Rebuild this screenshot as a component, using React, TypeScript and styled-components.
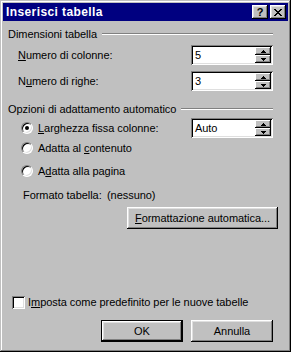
import React from "react";
import styled, { createGlobalStyle } from "styled-components";

const Global = createGlobalStyle`
  html, body { margin: 0; padding: 0; background: #c0c0c0; }
  body {
    font-family: "Liberation Sans", Arial, sans-serif;
    font-size: 11px;
    color: #000;
  }
`;

const Window = styled.div`
  width: 291px;
  height: 352px;
  box-sizing: border-box;
  background: #c0c0c0;
  padding: 3px;
  box-shadow: inset -1px -1px #000, inset 1px 1px #c0c0c0,
    inset -2px -2px #808080, inset 2px 2px #fff;
  display: flex;
  flex-direction: column;
`;

const TitleBar = styled.div`
  height: 18px;
  background: #000080;
  display: flex;
  align-items: center;
  padding: 0 2px 0 3px;
  color: #fff;
  font-weight: bold;
  font-size: 12px;
  letter-spacing: 0.4px;
`;

const TitleText = styled.span`
  flex: 1;
`;

const TitleButtons = styled.div`
  display: flex;
  gap: 2px;
`;

const TitleButton = styled.div`
  width: 16px;
  height: 14px;
  box-sizing: border-box;
  background: #c0c0c0;
  color: #000;
  box-shadow: inset -1px -1px #000, inset 1px 1px #fff,
    inset -2px -2px #808080, inset 2px 2px #dfdfdf;
  display: flex;
  align-items: center;
  justify-content: center;
  font-size: 11px;
  font-weight: bold;
  letter-spacing: 0;
  line-height: 1;
`;

const Body = styled.div`
  flex: 1;
  display: flex;
  flex-direction: column;
  padding: 6px 15px 0 5px;
  letter-spacing: -0.05px;
`;

const SectionHeader = styled.div<{ $top: number }>`
  display: flex;
  align-items: center;
  gap: 5px;
  height: 14px;
  margin-top: ${(p) => p.$top}px;
  white-space: nowrap;
`;

const Rule = styled.div`
  flex: 1;
  height: 0;
  border-top: 1px solid #808080;
  border-bottom: 1px solid #fff;
`;

const FieldRow = styled.div<{ $top: number; $indent: number }>`
  display: flex;
  align-items: center;
  justify-content: space-between;
  height: 20px;
  margin-top: ${(p) => p.$top}px;
  padding-left: ${(p) => p.$indent}px;
`;

const Mn = styled.span`
  text-decoration: underline;
`;

const SpinBox = styled.div`
  width: 82px;
  height: 20px;
  box-sizing: border-box;
  background: #fff;
  padding: 2px;
  box-shadow: inset 1px 1px #808080, inset -1px -1px #fff,
    inset 2px 2px #000, inset -2px -2px #dfdfdf;
  display: flex;
  align-items: stretch;
`;

const SpinValue = styled.div`
  flex: 1;
  display: flex;
  align-items: center;
  padding-left: 2px;
`;

const SpinButtons = styled.div`
  width: 16px;
  display: flex;
  flex-direction: column;
`;

const SpinButton = styled.div`
  flex: 1;
  background: #c0c0c0;
  box-shadow: inset -1px -1px #000, inset 1px 1px #fff,
    inset -2px -2px #808080;
  display: flex;
  align-items: center;
  justify-content: center;
`;

const RadioLabel = styled.div`
  display: flex;
  align-items: center;
  gap: 5px;
`;

const RadioCircle = styled.div<{ $checked?: boolean }>`
  width: 12px;
  height: 12px;
  box-sizing: border-box;
  border-radius: 50%;
  background: #fff;
  border: 1px solid;
  border-color: #808080 #fff #fff #808080;
  box-shadow: inset 1px 1px #000, inset -1px -1px #dfdfdf;
  display: flex;
  align-items: center;
  justify-content: center;
  &::after {
    content: "";
    display: ${(p) => (p.$checked ? "block" : "none")};
    width: 4px;
    height: 4px;
    border-radius: 50%;
    background: #000;
  }
`;

const InfoRow = styled.div`
  display: flex;
  align-items: center;
  height: 14px;
  margin-top: 7px;
  padding-left: 15px;
`;

const InfoLabel = styled.span`
  width: 84px;
`;

const ActionRow = styled.div<{ $top: number }>`
  display: flex;
  justify-content: flex-end;
  gap: 8px;
  margin-top: ${(p) => p.$top}px;
`;

const PushButton = styled.button<{ $w: number; $default?: boolean; $outdent?: number }>`
  width: ${(p) => p.$w}px;
  height: 22px;
  box-sizing: border-box;
  background: #c0c0c0;
  border: ${(p) => (p.$default ? "1px solid #000" : "none")};
  margin: 0 ${(p) => -(p.$outdent || 0)}px 0 0;
  padding: 0;
  font-family: inherit;
  font-size: 11px;
  letter-spacing: inherit;
  color: #000;
  box-shadow: inset -1px -1px #000, inset 1px 1px #fff,
    inset -2px -2px #808080, inset 2px 2px #dfdfdf;
`;

const CheckRow = styled.div`
  display: flex;
  align-items: center;
  gap: 3px;
  margin-top: auto;
  padding-left: 4px;
  height: 14px;
`;

const CheckBox = styled.div`
  width: 13px;
  height: 13px;
  box-sizing: border-box;
  background: #fff;
  box-shadow: inset 1px 1px #808080, inset -1px -1px #fff,
    inset 2px 2px #000, inset -2px -2px #dfdfdf;
`;

const Footer = styled.div`
  display: flex;
  justify-content: flex-end;
  gap: 8px;
  margin-top: 11px;
  margin-bottom: 7px;
`;

const Arrow = ({ up }: { up?: boolean }) => (
  <svg width="5" height="3" viewBox="0 0 5 3" shapeRendering="crispEdges">
    {up ? (
      <path d="M2 0h1v1h1v1h1v1H0V2h1V1h1z" fill="#000" />
    ) : (
      <path d="M0 0h5v1H4v1H3v1H2V2H1V1H0z" fill="#000" />
    )}
  </svg>
);

const Spinner = ({ value }: { value: string }) => (
  <SpinBox>
    <SpinValue>{value}</SpinValue>
    <SpinButtons>
      <SpinButton>
        <Arrow up />
      </SpinButton>
      <SpinButton>
        <Arrow />
      </SpinButton>
    </SpinButtons>
  </SpinBox>
);

export default function App() {
  return (
    <>
      <Global />
      <Window>
        <TitleBar>
          <TitleText>Inserisci tabella</TitleText>
          <TitleButtons>
            <TitleButton>?</TitleButton>
            <TitleButton>
              <svg width="8" height="7" viewBox="0 0 8 7" shapeRendering="crispEdges">
                <path
                  d="M0 0h2v1h1v1h2V1h1V0h2v1H7v1H6v1H5v1h1v1h1v1h1v1H6V6H5V5H3v1H2v1H0V6h1V5h1V4h1V3H2V2H1V1H0z"
                  fill="#000"
                />
              </svg>
            </TitleButton>
          </TitleButtons>
        </TitleBar>
        <Body>
          <SectionHeader $top={0}>
            <span>Dimensioni tabella</span>
            <Rule />
          </SectionHeader>
          <FieldRow $top={4} $indent={10}>
            <span>
              <Mn>N</Mn>umero di colonne:
            </span>
            <Spinner value="5" />
          </FieldRow>
          <FieldRow $top={6} $indent={10}>
            <span>
              N<Mn>u</Mn>mero di righe:
            </span>
            <Spinner value="3" />
          </FieldRow>
          <SectionHeader $top={11}>
            <span>Opzioni di adattamento automatico</span>
            <Rule />
          </SectionHeader>
          <FieldRow $top={2} $indent={13}>
            <RadioLabel>
              <RadioCircle $checked />
              <span>
                <Mn>L</Mn>arghezza fissa colonne:
              </span>
            </RadioLabel>
            <Spinner value="Auto" />
          </FieldRow>
          <FieldRow $top={0} $indent={13}>
            <RadioLabel>
              <RadioCircle />
              <span>
                Adatta al <Mn>c</Mn>ontenuto
              </span>
            </RadioLabel>
          </FieldRow>
          <FieldRow $top={3} $indent={13}>
            <RadioLabel>
              <RadioCircle />
              <span>
                A<Mn>d</Mn>atta alla pagina
              </span>
            </RadioLabel>
          </FieldRow>
          <InfoRow>
            <InfoLabel>Formato tabella:</InfoLabel>
            <span>(nessuno)</span>
          </InfoRow>
          <ActionRow $top={5}>
            <PushButton $w={151} $outdent={5}>
              <Mn>F</Mn>ormattazione automatica...
            </PushButton>
          </ActionRow>
          <CheckRow>
            <CheckBox />
            <span>
              I<Mn>m</Mn>posta come predefinito per le nuove tabelle
            </span>
          </CheckRow>
          <Footer>
            <PushButton $w={82} $default>
              OK
            </PushButton>
            <PushButton $w={82}>Annulla</PushButton>
          </Footer>
        </Body>
      </Window>
    </>
  );
}
